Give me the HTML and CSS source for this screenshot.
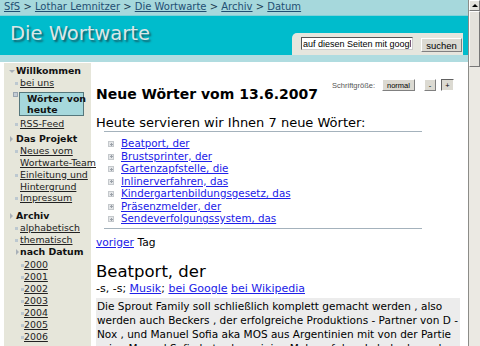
FILE: index.html
```
<!DOCTYPE html>
<html lang="de">
<head>
  <meta charset="UTF-8">
  <title>Die Wortwarte - Neue Wörter vom 13.6.2007</title>
  <link rel="stylesheet" href="styles.css">
</head>
<body>

<div class="window">
  <div class="page">
    <div class="crumbs">
      <a href="#">SfS</a> &gt; <a href="#">Lothar Lemnitzer</a> &gt; <a href="#">Die Wortwarte</a> &gt; <a href="#">Archiv</a> &gt; <a href="#">Datum</a>
    </div>

    <div class="header">
      <div class="logo">Die Wortwarte</div>
      <form class="search">
        <input type="text" value="auf diesen Seiten mit google">
        <button type="button">suchen</button>
      </form>
    </div>
    <div class="strip"></div>

    <div class="main">
      <ul class="nav">
        <li class="group open">Willkommen
          <ul>
            <li><a href="#">bei uns</a></li>
            <li class="current"><span>Wörter von<br>heute</span></li>
            <li><a href="#">RSS-Feed</a></li>
          </ul>
        </li>
        <li class="group">Das Projekt
          <ul>
            <li><a href="#">Neues vom <span class="nobr">Wortwarte-Team</span></a></li>
            <li><a href="#">Einleitung und Hintergrund</a></li>
            <li><a href="#">Impressum</a></li>
          </ul>
        </li>
        <li class="group archive">Archiv
          <ul>
            <li><a href="#">alphabetisch</a></li>
            <li><a href="#">thematisch</a></li>
            <li class="sub">nach Datum
              <ul>
                <li><a href="#">2000</a></li>
                <li><a href="#">2001</a></li>
                <li><a href="#">2002</a></li>
                <li><a href="#">2003</a></li>
                <li><a href="#">2004</a></li>
                <li><a href="#">2005</a></li>
                <li><a href="#">2006</a></li>
              </ul>
            </li>
          </ul>
        </li>
      </ul>

      <div class="content">
        <div class="fontsize">
          <span>Schriftgröße:</span>
          <button type="button" class="normal">normal</button>
          <button type="button" class="minus">-</button>
          <button type="button" class="plus">+</button>
        </div>

        <h1>Neue Wörter vom 13.6.2007</h1>

        <h2>Heute servieren wir Ihnen 7 neue Wörter:</h2>
        <ul class="words">
          <li><a href="#">Beatport, der</a></li>
          <li><a href="#">Brustsprinter, der</a></li>
          <li><a href="#">Gartenzapfstelle, die</a></li>
          <li><a href="#">Inlinerverfahren, das</a></li>
          <li><a href="#">Kindergartenbildungsgesetz, das</a></li>
          <li><a href="#">Präsenzmelder, der</a></li>
          <li><a href="#">Sendeverfolgungssystem, das</a></li>
        </ul>

        <p class="prev"><a href="#">voriger</a> Tag</p>

        <h3>Beatport, der</h3>
        <p class="meta">-s, -s; <a href="#">Musik</a>; <a href="#">bei Google</a> <a href="#">bei Wikipedia</a></p>
        <p class="quote">Die Sprout Family soll schließlich komplett gemacht werden , also werden auch Beckers , der erfolgreiche Produktions - Partner von D - Nox , und Manuel Sofia aka MOS aus Argentinien mit von der Partie sein . Manuel Sofia hat schon einige Male auf dem Label released</p>
      </div>
    </div>
  </div>

  <div class="scrollbar">
    <div class="arrow"></div>
    <div class="thumb"></div>
    <div class="track"></div>
  </div>
</div>

</body>
</html>
```

FILE: styles.css
```
html, body {
  margin: 0;
  height: 100%;
  overflow: hidden;
}
body {
  font-family: "DejaVu Sans", Verdana, sans-serif;
  font-size: 11px;
  color: #000;
  background: #fff;
}
.window {
  display: flex;
  height: 346px;
}
.page {
  flex: 1;
  min-width: 0;
  overflow: hidden;
}

/* top */
.crumbs {
  background: #a6d8dc;
  height: 15px;
  line-height: 14px;
  padding-left: 4px;
  font-size: 10px;
  color: #1c3850;
  white-space: nowrap;
}
.crumbs a {
  color: #1f4f73;
}
.header {
  background: #00bccc;
  height: 39px;
  display: flex;
  justify-content: space-between;
  align-items: flex-end;
  border-top: 1px solid #7fd0d8;
}
.logo {
  margin: 0 0 10px 10px;
  font-size: 19.5px;
  line-height: 22px;
  color: #dce6e6;
  text-shadow: 2px 2px 2px #13606a;
}
.search {
  background: #e6e6de;
  border-top-left-radius: 5px;
  margin-right: 5px;
  width: 171px;
  box-sizing: border-box;
  height: 22px;
  padding: 4px 1px 0 9px;
  display: flex;
  gap: 8px;
  align-items: flex-start;
}
.search input {
  width: 112px;
  height: 13px;
  box-sizing: border-box;
  padding: 0 1px;
  border: 1px solid #555;
  border-right-color: #ccc;
  border-bottom-color: #ccc;
  font-family: "Liberation Sans", Arial, sans-serif;
  font-size: 9px;
  line-height: 11px;
}
.search button,
.fontsize button {
  background: #dcdad2;
  border: 1px solid #808080;
  border-top-color: #fff;
  border-left-color: #fff;
  font-family: "Liberation Sans", Arial, sans-serif;
  padding: 0;
  color: #000;
}
.search button {
  width: 42px;
  height: 14px;
  margin-top: 1px;
  font-size: 9.5px;
  line-height: 11px;
}
.strip {
  height: 7px;
  background: #b0dce0;
}

/* columns */
.main {
  display: flex;
  align-items: flex-start;
}

.nav {
  list-style: none;
  margin: 1px 0 0 4px;
  padding: 2px 0 30px 0;
  width: 87px;
  flex-shrink: 0;
  background: #e6e6da;
  font-size: 9.4px;
  line-height: 12px;
  color: #111;
}
.nav ul {
  list-style: none;
  margin: 0 0 0 4px;
  padding: 0;
  font-weight: normal;
}
.nav li {
  position: relative;
}
.nav .nobr {
  white-space: nowrap;
}
.nav .group {
  font-weight: bold;
  padding-left: 12px;
  margin-bottom: 4px;
}
.nav .archive {
  margin-top: 6px;
}
.nav .group > ul > li {
  line-height: 11.7px;
}
.nav .group::before,
.nav .sub::before {
  content: "";
  position: absolute;
  left: 6px;
  top: 3px;
  border: 3px solid transparent;
  border-left-color: #a8b0b8;
  border-right: none;
}
.nav .group.open::before {
  left: 5px;
  top: 5px;
  border: 3px solid transparent;
  border-top-color: #a8b0b8;
  border-bottom: none;
}
.nav .group li::before {
  content: "";
  position: absolute;
  left: -5px;
  top: 5px;
  width: 3px;
  height: 3px;
  background: #bcc8d0;
}
.nav .group li.sub {
  font-weight: bold;
  margin-top: 1px;
}
.nav .group li.sub::before {
  left: -4px;
  top: 3px;
  width: 0;
  height: 0;
  background: none;
}
.nav .sub ul {
  margin-top: 1px;
}
.nav .sub li {
  line-height: 12px;
}
.nav .sub li::before {
  left: -3px;
}
.nav a {
  color: #222;
  text-decoration: underline;
}
.nav .group li.current {
  margin: 3px 7px 2px -1px;
}
.nav .group li.current::before {
  left: -6px;
  top: 0;
  width: 3px;
  height: 3px;
  background: #c4ccd4;
  border: 1px solid #98a4b0;
}
.nav li.current span {
  display: block;
  background: #a6d8dc;
  border: 1px solid #55777c;
  font-weight: bold;
  line-height: 11px;
  padding: 0 0 0 7px;
  white-space: nowrap;
}

/* content */
.content {
  flex: 1;
  min-width: 0;
  padding: 17px 4px 0 5px;
}
.fontsize {
  float: right;
  display: flex;
  align-items: center;
  height: 12px;
  margin-right: 10px;
  font-family: "Liberation Sans", Arial, sans-serif;
  font-size: 7.5px;
  color: #555;
}
.fontsize button {
  height: 12px;
  font-size: 7.5px;
  line-height: 9px;
}
.fontsize .normal {
  width: 33px;
  margin-left: 7px;
}
.fontsize .minus {
  width: 12px;
  margin-left: 9px;
}
.fontsize .plus {
  width: 13px;
  margin-left: 5px;
  border-color: #606060 #fff #fff #606060;
}
h1 {
  font-size: 14px;
  line-height: 17px;
  margin: 7px 0 12px;
}
h2 {
  font-size: 13px;
  line-height: 16px;
  font-weight: normal;
  margin: 0;
}
.words {
  margin: 0 42px 0 8px;
  padding: 5px 0 3px 17px;
  border-top: 1px solid #a4b2bc;
  border-bottom: 1px solid #a4b2bc;
  list-style: none;
  font-size: 10.3px;
  line-height: 12.5px;
}
.words li {
  position: relative;
}
.words li::before {
  content: "";
  position: absolute;
  left: -13px;
  top: 4px;
  width: 4px;
  height: 4px;
  border: 1px solid #c4c8cc;
  background: linear-gradient(#9aa0a8, #9aa0a8) center / 3px 1px no-repeat,
              linear-gradient(#9aa0a8, #9aa0a8) center / 1px 3px no-repeat,
              #e4e6e8;
}
a {
  color: #2020e8;
}
.prev {
  font-size: 10.7px;
  line-height: 14px;
  margin: 7px 0 0;
}
h3 {
  font-size: 16.5px;
  line-height: 19px;
  font-weight: normal;
  margin: 12px 0 1px;
}
.meta {
  font-size: 11px;
  line-height: 14px;
  margin: 0 0 2px;
}
.quote {
  background: #ececec;
  margin: 0 4px 0 0;
  padding: 1px 1px 0;
  font-size: 10.5px;
  line-height: 14px;
}

/* scrollbar */
.scrollbar {
  width: 11px;
  flex-shrink: 0;
  background: #ebe9e3;
  border-left: 1px solid #8c8c88;
  display: flex;
  flex-direction: column;
}
.arrow,
.thumb {
  background: #e4e2dc;
  border: 1px solid #fff;
  border-right-color: #777;
  border-bottom-color: #777;
  box-sizing: border-box;
}
.arrow {
  height: 11px;
  position: relative;
}
.arrow::after {
  content: "";
  position: absolute;
  left: 2px;
  top: 3px;
  border: 3px solid transparent;
  border-bottom-color: #000;
  border-top: none;
}
.thumb {
  height: 56px;
}
.track {
  flex: 1;
}
```
